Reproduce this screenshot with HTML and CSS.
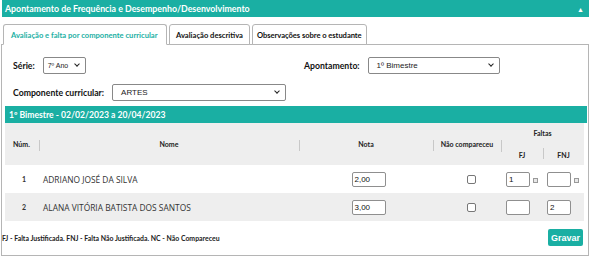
FILE: index.html
```html
<!DOCTYPE html>
<html lang="pt">
<head>
<meta charset="utf-8">
<link rel="stylesheet" href="styles.css">
</head>
<body>
<div class="app">
  <div class="header">
    <span>Apontamento de Frequência e Desempenho/Desenvolvimento</span>
    <span class="arrow">▲</span>
  </div>
  <div class="tabs">
    <div class="tab active">Avaliação e falta por componente curricular</div>
    <div class="tab">Avaliação descritiva</div>
    <div class="tab t3">Observações sobre o estudante</div>
  </div>
  <div class="panel">
    <div class="form-row first">
      <div class="group g1">
        <label class="lbl">Série:</label>
        <div class="select s-serie"><span>7º Ano</span><i class="chev"></i></div>
      </div>
      <div class="group">
        <label class="lbl">Apontamento:</label>
        <div class="select s-apont"><span>1º Bimestre</span><i class="chev"></i></div>
      </div>
    </div>
    <div class="form-row second">
      <div class="group">
        <label class="lbl">Componente curricular:</label>
        <div class="select s-comp"><span>ARTES</span><i class="chev"></i></div>
      </div>
    </div>
    <div class="section">
      <div class="section-title">1º Bimestre - 02/02/2023 a 20/04/2023</div>
      <table class="grid">
        <colgroup>
          <col class="w-num"><col class="w-nome"><col class="w-nota"><col class="w-nc"><col class="w-fj"><col class="w-fnj">
        </colgroup>
        <thead>
          <tr class="h1">
            <th rowspan="2" class="c-num">Núm.</th>
            <th rowspan="2" class="sep">Nome</th>
            <th rowspan="2" class="sep">Nota</th>
            <th rowspan="2" class="sep">Não compareceu</th>
            <th colspan="2" class="faltas">Faltas</th>
          </tr>
          <tr class="h2">
            <th class="fj">FJ</th>
            <th class="fnj">FNJ</th>
          </tr>
        </thead>
        <tbody>
          <tr>
            <td class="num">1</td>
            <td class="name">ADRIANO JOSÉ DA SILVA</td>
            <td class="ctr"><span class="inp nota">2,00</span></td>
            <td class="ctr"><span class="chk"></span></td>
            <td class="f"><span class="inp sm">1</span><span class="mini"></span></td>
            <td class="f f2"><span class="inp sm"></span><span class="mini"></span></td>
          </tr>
          <tr class="alt">
            <td class="num">2</td>
            <td class="name">ALANA VITÓRIA BATISTA DOS SANTOS</td>
            <td class="ctr"><span class="inp nota">3,00</span></td>
            <td class="ctr"><span class="chk"></span></td>
            <td class="f"><span class="inp sm"></span><span class="mini hid"></span></td>
            <td class="f f2"><span class="inp sm">2</span><span class="mini hid"></span></td>
          </tr>
        </tbody>
      </table>
    </div>
    <div class="footer">
      <span class="legend">FJ - Falta Justificada. FNJ - Falta Não Justificada. NC - Não Compareceu</span>
      <button class="btn">Gravar</button>
    </div>
  </div>
</div>
</body>
</html>
```
FILE: styles.css
```css
* { box-sizing: border-box; }
body { margin: 0; background: #fff; font-family: Lato, "Noto Sans", sans-serif; color: #222; }
.app { width: 589px; padding-left: 1px; }
.header {
  margin-left: 1px;
  height: 17px; background: #1aafa3; color: #fff;
  font-weight: 700; font-size: 8.8px;
  display: flex; align-items: center; justify-content: space-between;
  padding: 0 5px 0 3px;
}
.arrow { font-size: 7px; }
.tabs { display: flex; gap: 2px; margin-top: 7px; margin-left: 2px; position: relative; z-index: 1; }
.tab {
  height: 21px; border: 1px solid #b5b5b5; border-radius: 3px 3px 0 0;
  background: #fff; font-weight: 700; font-size: 7.6px; color: #111;
  display: flex; align-items: center; padding: 0 6px;
}
.tab.t3 { padding: 0 4px; letter-spacing: -0.05px; }
.tab.active { color: #1aafa3; border-bottom-color: #fff; width: 164px; padding-left: 7px; }
.panel { border: 1px solid #b5b5b5; margin-top: -1px; height: 212px; display: flex; flex-direction: column; }
.form-row { display: flex; align-items: center; padding-left: 11px; }
.form-row.first { margin-top: 11px; height: 18px; }
.form-row.second { margin-top: 9px; height: 18px; }
.group { display: flex; align-items: center; }
.g1 { width: 291px; }
.lbl { font-weight: 700; font-size: 8.7px; color: #111; margin-right: 8px; }
.select {
  height: 17px; border: 1px solid #888; border-radius: 2px; background: #fff;
  display: flex; align-items: center; justify-content: space-between;
  padding: 0 6px 0 8px; font-family: "Liberation Sans", Arial, sans-serif; font-size: 8px; color: #222;
}
.s-serie { width: 43px; padding-left: 4px; font-size: 7px; }
.s-apont { width: 132px; }
.s-comp { width: 174px; }
.chev { width: 4px; height: 4px; border-right: 1.5px solid #222; border-bottom: 1.5px solid #222; transform: rotate(45deg); margin-top: -3px; }
.section { margin: 5px 1px 0 3px; }
.section-title { height: 17px; background: #1aafa3; color: #fff; font-weight: 700; font-size: 8.6px; display: flex; align-items: center; padding-left: 4px; }
.grid { width: 579px; border-collapse: collapse; table-layout: fixed; }
.w-num { width: 34px; }
.w-nome { width: 260px; }
.w-nota { width: 134px; }
.w-nc { width: 68px; }
.w-fj { width: 42px; }
.w-fnj { width: 41px; }
.grid th { background: #eeeeee; font-size: 7px; font-weight: 700; color: #222; position: relative; padding: 0; vertical-align: middle; }
.grid tr.h1 th { height: 20px; }
.grid tr.h2 th { height: 22px; }
.c-num { text-align: left; padding-left: 8px !important; }
.sep::before, .fj::before, .fnj::before {
  content: ""; position: absolute; left: 0; top: 17px; height: 11px; border-left: 1px solid #c8c8c8;
}
.fj::before { top: -3px; height: 12px; }
.fnj::before { top: 5px; height: 11px; }
.fj { padding-top: 2px !important; }
.fnj { padding-top: 2px !important; }
.grid td { height: 28px; padding: 0; font-size: 8.5px; }
.grid tr.alt td { background: #eeeeee; }
.num { text-align: center; font-weight: 700; font-size: 7px !important; padding-left: 4px !important; color: #333; }
.name { font-family: "Open Sans", sans-serif; font-size: 8.4px !important; color: #333; padding-left: 4px !important; }
.ctr { text-align: center; }
.inp {
  display: inline-block; vertical-align: middle; height: 15px; border: 1px solid #8f8f8f; border-radius: 2px; background: #fff;
  font-family: "Liberation Sans", Arial, sans-serif; font-size: 8px; line-height: 13px; text-align: left; padding-left: 2px; color: #111;
}
.nota { width: 34px; margin-left: 5px; }
.sm { width: 24px; }
.f { text-align: left; padding-left: 5px !important; }
.f2 { padding-left: 4px !important; }
.mini { display: inline-block; vertical-align: middle; width: 5px; height: 5px; border: 1px solid #999; background: #e8e8e8; margin-left: 3px; margin-top: 3px; }
.mini.hid { visibility: hidden; }
.chk { display: inline-block; vertical-align: middle; width: 9px; height: 9px; border: 1px solid #777; border-radius: 2px; background: #fff; margin-left: 8px; }
.footer { display: flex; justify-content: space-between; align-items: center; margin-top: 8px; padding: 0 5px 0 0; }
.legend { font-size: 6.9px; font-weight: 700; color: #222; }
.btn {
  border: none; background: #1aafa3; color: #fff; font-family: "Liberation Sans", Arial, sans-serif; font-weight: 700;
  font-size: 9px; height: 17px; width: 35px; border-radius: 2px; padding: 0;
}
```
